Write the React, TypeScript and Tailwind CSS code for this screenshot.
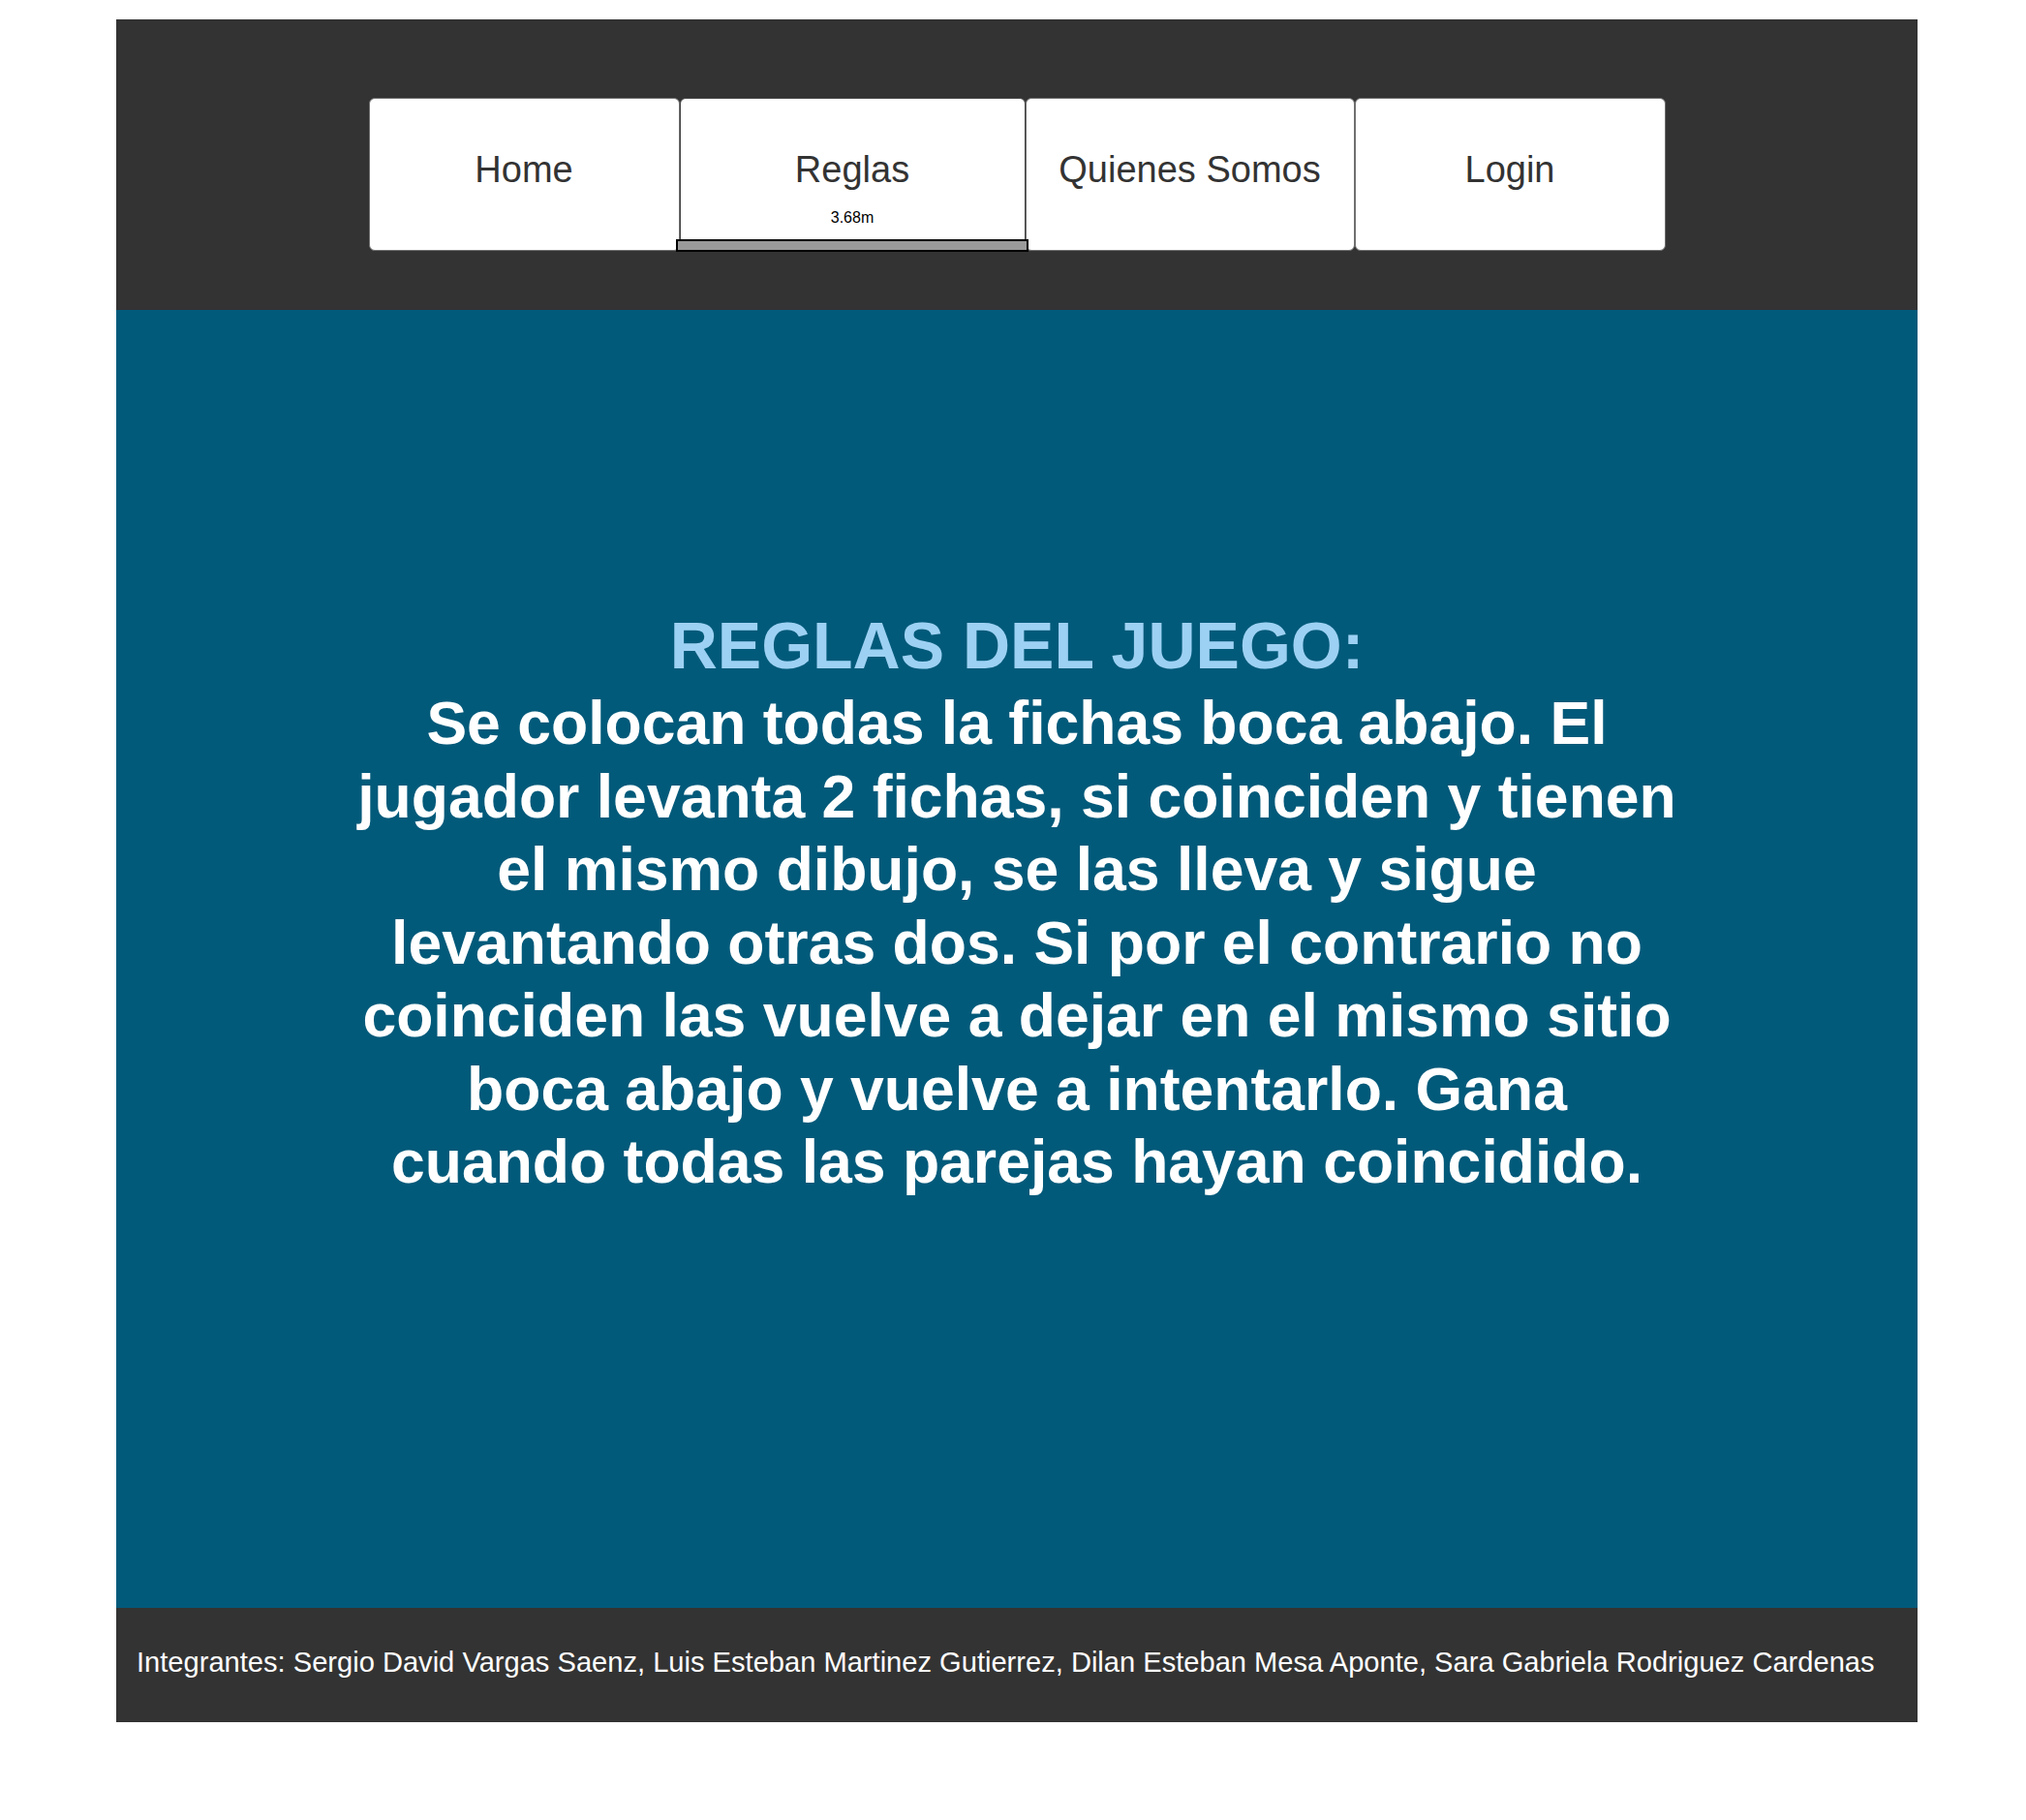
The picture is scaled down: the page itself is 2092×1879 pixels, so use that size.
import React from 'react';

const font = { fontFamily: '"Liberation Sans", Arial, sans-serif' };

function NavButton({ label, className }: { label: string; className: string }) {
  return (
    <div
      className={`flex h-[158px] items-start justify-center rounded-[6px] border border-[#6f6f6f] bg-white pt-[51px] text-[38px] leading-[44px] text-[#333] ${className}`}
    >
      {label}
    </div>
  );
}

export default function App() {
  return (
    <div className="min-h-[1879px] bg-white pt-[20px]" style={font}>
      <div className="ml-[120px] w-[1860px]">
        {/* header / nav */}
        <header className="flex h-[300px] justify-center bg-[#333333] pt-[81px]">
          <div className="flex items-start">
            <NavButton label="Home" className="w-[321px]" />
            <div className="relative">
              <NavButton label="Reglas" className="w-[357px] border-[#444]" />
              <span className="absolute left-0 right-0 top-[114px] text-center text-[16px] leading-[20px] text-black">
                3.68m
              </span>
              <div className="absolute left-[-4px] right-[-3px] top-[146px] h-[13px] border-2 border-black bg-[#9a9a9a]" />
            </div>
            <NavButton label="Quienes Somos" className="w-[340px]" />
            <NavButton label="Login" className="w-[321px]" />
          </div>
        </header>

        {/* reglas */}
        <main className="h-[1340px] bg-[#025a7a] pt-[306px] text-center font-bold">
          <h1 className="text-[68px] leading-[80px] text-[#9dd1f3]">REGLAS DEL JUEGO:</h1>
          <p className="mt-[3px] text-[62.5px] leading-[75.5px] text-white">
            Se colocan todas la fichas boca abajo. El
            <br />
            jugador levanta 2 fichas, si coinciden y tienen
            <br />
            el mismo dibujo, se las lleva y sigue
            <br />
            levantando otras dos. Si por el contrario no
            <br />
            coinciden las vuelve a dejar en el mismo sitio
            <br />
            boca abajo y vuelve a intentarlo. Gana
            <br />
            cuando todas las parejas hayan coincidido.
          </p>
        </main>

        {/* integrantes */}
        <footer className="flex h-[118px] items-center bg-[#333333] pb-[4px] pl-[21px] text-[29.1px] text-white">
          Integrantes: Sergio David Vargas Saenz, Luis Esteban Martinez Gutierrez, Dilan Esteban Mesa Aponte, Sara Gabriela
          Rodriguez Cardenas
        </footer>
      </div>
    </div>
  );
}
